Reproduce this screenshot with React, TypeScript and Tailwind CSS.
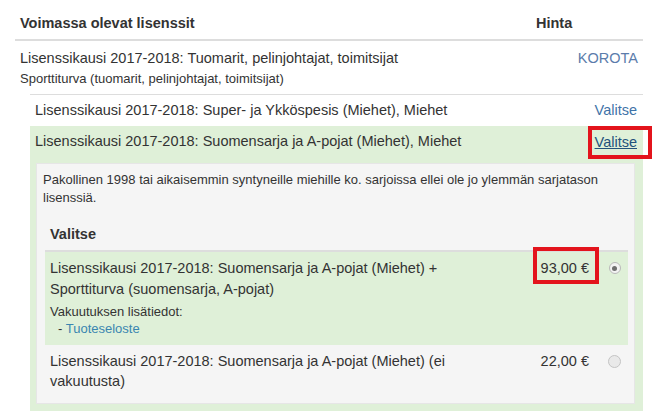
export default function App() {
  const font = { fontFamily: '"Liberation Sans", Arial, sans-serif' };

  return (
    <div className="h-[419px] w-[659px] overflow-hidden bg-white text-[14.5px] text-[#333]" style={font}>
      <div className="ml-[15px] w-[628px] pt-[13px]">
        {/* Header */}
        <div className="flex h-[28px] items-center border-b-2 border-[#ddd] pb-[4px] font-bold">
          <div className="flex-1 pl-[5px]">Voimassa olevat lisenssit</div>
          <div className="w-[107px]">Hinta</div>
        </div>

        {/* Upgradable licence */}
        <div className="flex px-[5px] pt-[6px] pb-[6px]">
          <div className="flex-1">
            <div className="leading-[22px]">Lisenssikausi 2017-2018: Tuomarit, pelinjohtajat, toimitsijat</div>
            <div className="text-[13px] leading-[19px]">Sporttiturva (tuomarit, pelinjohtajat, toimitsijat)</div>
          </div>
          <a className="pt-[1px] leading-[20px] text-[#5b7cab]">KOROTA</a>
        </div>

        <div className="ml-[15px]">
          <div className="flex h-[32px] items-center border-t border-[#ddd] pr-[6px] pl-[5px]">
            <div className="flex-1">Lisenssikausi 2017-2018: Super- ja Ykköspesis (Miehet), Miehet</div>
            <a className="text-[#3f73a8]">Valitse</a>
          </div>

          <div className="flex h-[32px] items-center bg-[#dff0d8] pr-[6px] pl-[5px]">
            <div className="flex-1">Lisenssikausi 2017-2018: Suomensarja ja A-pojat (Miehet), Miehet</div>
            <span className="relative leading-[20px]">
              <a className="text-[#23527c] underline">Valitse</a>
              <span className="absolute -top-[6px] -right-[15px] -bottom-[7px] -left-[7px] border-4 border-[#e3141c]" />
            </span>
          </div>

          {/* Expanded options */}
          <div className="bg-[#dff0d8] pt-[5px] pr-[8px] pb-[7px] pl-[6px]">
            <div className="border border-[#e6e6e6] bg-[#f5f5f5] pt-[7px] pr-[6px] pb-[12px] pl-[6px]">
              <p className="text-[13px] leading-[18px]">
                Pakollinen 1998 tai aikaisemmin syntyneille miehille ko. sarjoissa ellei ole jo ylemmän sarjatason lisenssiä.
              </p>

              <div className="mt-[18px] ml-[2px]">
                <div className="border-b-2 border-[#ddd] pb-[7px] pl-[5px] font-bold leading-[18px]">Valitse</div>

                <div className="flex items-start bg-[#dff0d8] pt-[6px] pb-[8px] pl-[5px]">
                  <div className="w-[430px]">
                    <div className="leading-[21px]">
                      Lisenssikausi 2017-2018: Suomensarja ja A-pojat (Miehet) + Sporttiturva (suomensarja, A-pojat)
                    </div>
                    <div className="mt-[3px] text-[13px] leading-[17px]">Vakuutuksen lisätiedot:</div>
                    <div className="pl-[8px] text-[13px] leading-[17px]">
                      - <a className="text-[#3a86b0]">Tuoteseloste</a>
                    </div>
                  </div>
                  <div className="flex flex-1 items-start justify-end pr-[12px]">
                    <span className="relative leading-[20px]">
                      93,00 €
                      <span className="absolute -top-[11px] -right-[10px] -bottom-[6px] -left-[8px] border-4 border-[#e3141c]" />
                    </span>
                  </div>
                  <div className="flex w-[27px] justify-center pt-[4px]">
                    <span className="flex h-[12px] w-[12px] items-center justify-center rounded-full border border-[#b9b9b9] bg-[#f3f3f3]">
                      <span className="h-[5px] w-[5px] rounded-full bg-[#6f6f6f]" />
                    </span>
                  </div>
                </div>

                <div className="flex items-start pt-[6px] pl-[5px]">
                  <div className="w-[430px] leading-[20px]">
                    Lisenssikausi 2017-2018: Suomensarja ja A-pojat (Miehet) (ei vakuutusta)
                  </div>
                  <div className="flex-1 pr-[12px] text-right leading-[20px]">22,00 €</div>
                  <div className="flex w-[27px] justify-center pt-[4px]">
                    <span className="h-[13px] w-[13px] rounded-full border border-[#c4c4c4] bg-[#e9e9e9]" />
                  </div>
                </div>
              </div>
            </div>
          </div>
        </div>
      </div>
    </div>
  );
}
